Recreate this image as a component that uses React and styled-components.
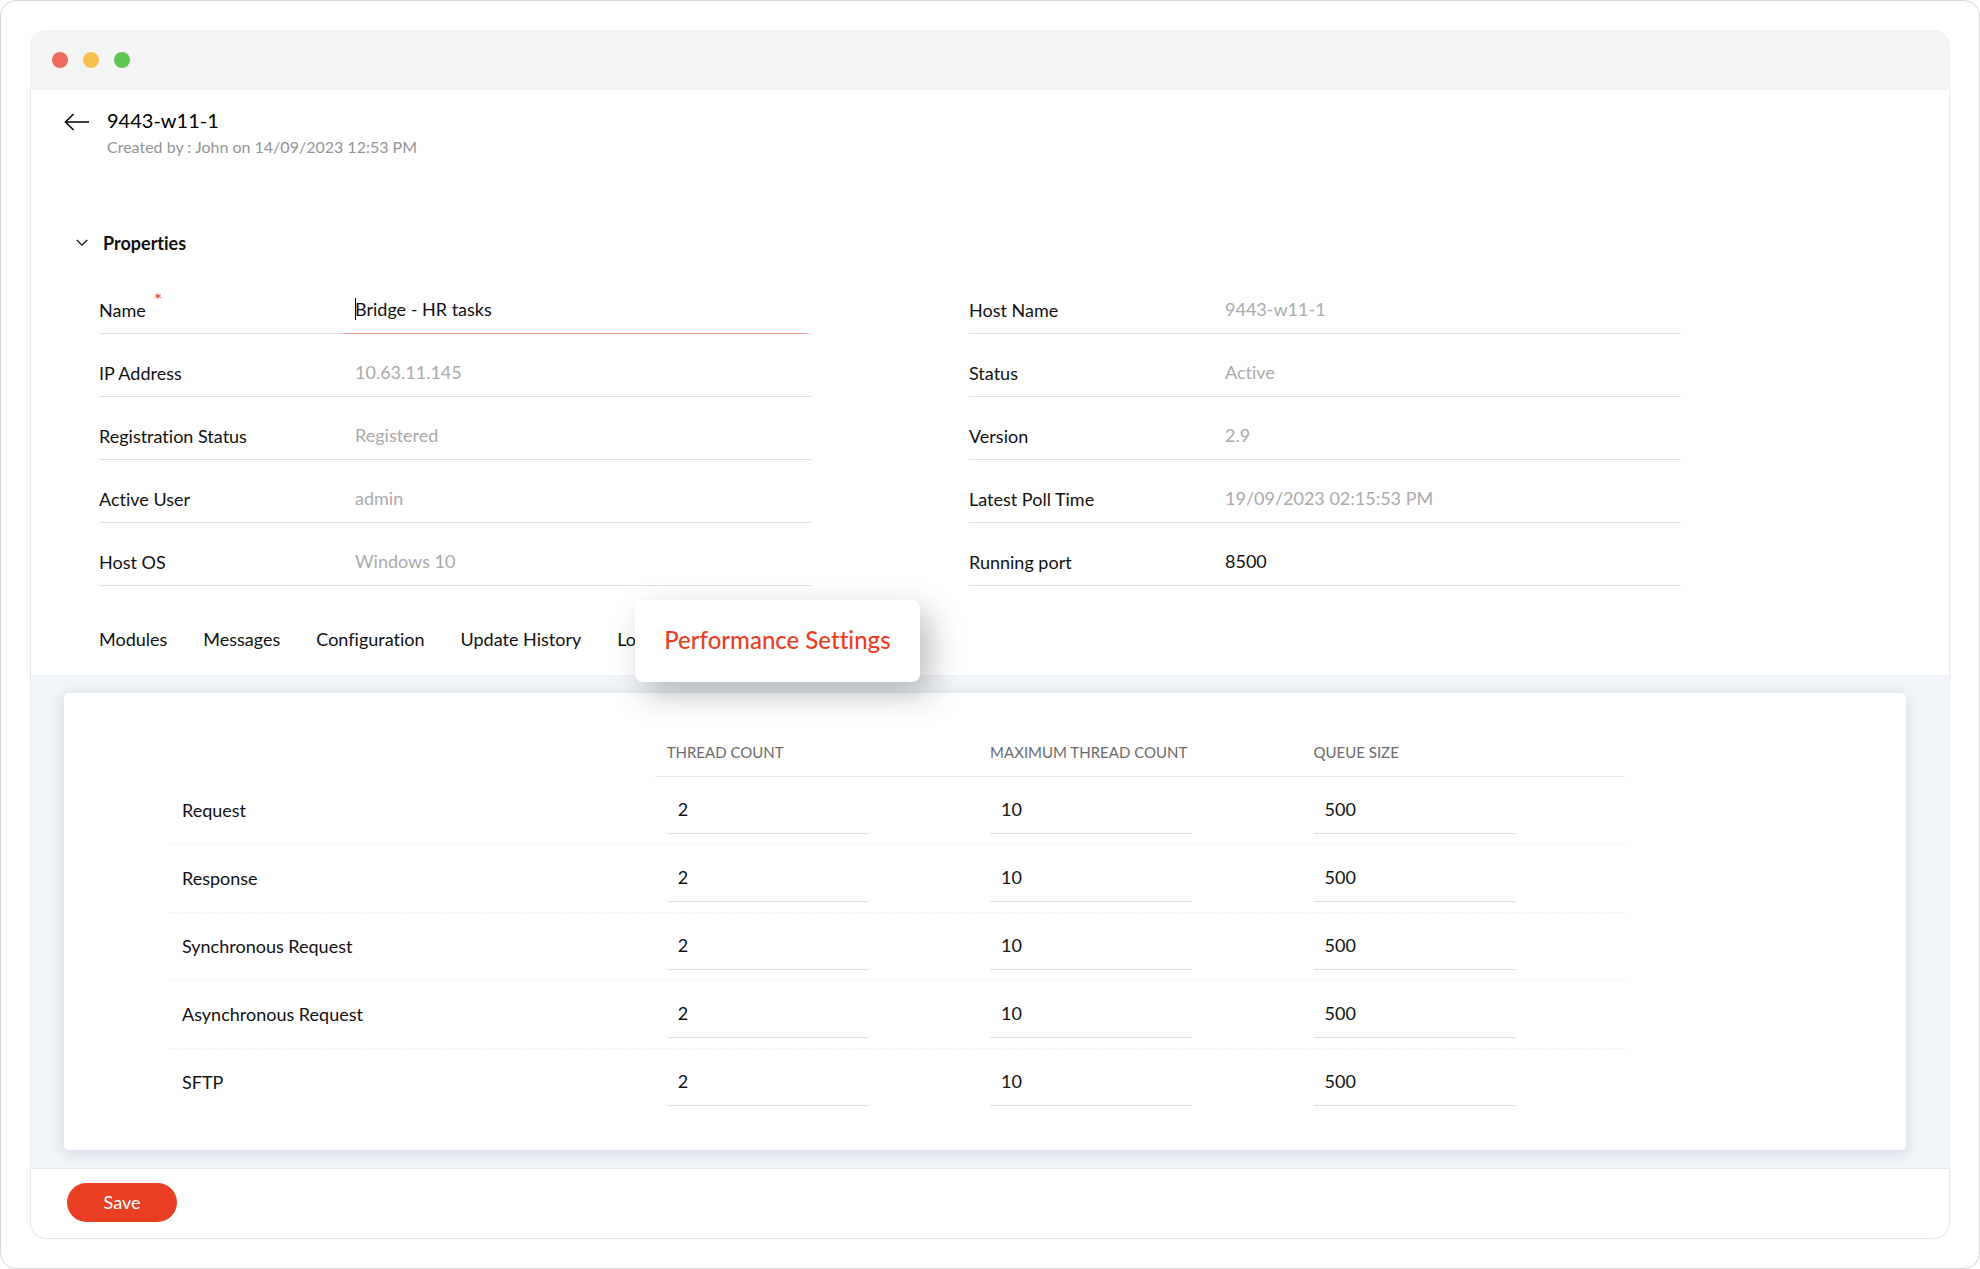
import React from "react";
import styled, { createGlobalStyle } from "styled-components";

const colors = {
  accent: "#ea3f25",
  accentLine: "#f4978c",
  band: "#f1f4f8",
  text: "#111111",
  muted: "#aaaaaa",
  subtle: "#949494",
  line: "#e0e0e0",
};

const leftFields = [
  { id: "name", label: "Name", value: "Bridge - HR tasks", required: true, editable: true },
  { id: "ip", label: "IP Address", value: "10.63.11.145" },
  { id: "registration", label: "Registration Status", value: "Registered" },
  { id: "user", label: "Active User", value: "admin" },
  { id: "os", label: "Host OS", value: "Windows 10" },
];

const rightFields = [
  { id: "host", label: "Host Name", value: "9443-w11-1" },
  { id: "status", label: "Status", value: "Active" },
  { id: "version", label: "Version", value: "2.9" },
  { id: "poll", label: "Latest Poll Time", value: "19/09/2023 02:15:53 PM" },
  { id: "port", label: "Running port", value: "8500", editable: true },
];

const tabs = ["Modules", "Messages", "Configuration", "Update History", "Logs"];
const columns = ["Thread Count", "Maximum Thread Count", "Queue Size"];
const rows = ["Request", "Response", "Synchronous Request", "Asynchronous Request", "SFTP"];
const defaults = ["2", "10", "500"];

const Field = ({ id, label, value, required, editable }) => (
  <FieldRow>
    <Label htmlFor={id}>
      {label}
      {required && <Required>*</Required>}
    </Label>
    <ValueCell $active={required}>
      <ValueInput id={id} defaultValue={value} readOnly={!editable} $editable={editable} $active={required} />
    </ValueCell>
  </FieldRow>
);

const App = () => {
  return (
    <Frame>
      <GlobalStyle />
      <Window>
        <TitleBar>
          <Dot $color="#ed6a5e" />
          <Dot $color="#f5bf4f" />
          <Dot $color="#61c554" />
        </TitleBar>

        <Header>
          <BackButton type="button" aria-label="Back">
            <svg width="26" height="18" viewBox="0 0 26 18" fill="none" stroke="#000" strokeWidth="1.5">
              <path d="M1.2 9H25M9.6 1L1.4 9l8.2 8" />
            </svg>
          </BackButton>
          <div>
            <Title>9443-w11-1</Title>
            <Created>Created by : John on 14/09/2023 12:53 PM</Created>
          </div>
        </Header>

        <SectionToggle type="button">
          <svg width="12" height="8" viewBox="0 0 12 8" fill="none" stroke="#111" strokeWidth="1.3">
            <path d="M0.8 1L6 6.2 11.2 1" />
          </svg>
          Properties
        </SectionToggle>

        <Properties>
          <div>
            {leftFields.map((field) => (
              <Field key={field.id} {...field} />
            ))}
          </div>
          <div>
            {rightFields.map((field) => (
              <Field key={field.id} {...field} />
            ))}
          </div>
        </Properties>

        <Tabs>
          {tabs.map((tab) => (
            <Tab key={tab} href="#">
              {tab}
            </Tab>
          ))}
          <ActiveTab href="#">Performance Settings</ActiveTab>
        </Tabs>

        <Band>
          <Card>
            <Table>
              <thead>
                <tr>
                  <Corner />
                  {columns.map((column) => (
                    <ColumnHead key={column} scope="col">
                      {column}
                    </ColumnHead>
                  ))}
                </tr>
              </thead>
              <tbody>
                {rows.map((row) => (
                  <Row key={row}>
                    <RowHead scope="row">{row}</RowHead>
                    {columns.map((column, i) => (
                      <Cell key={column}>
                        <CellInput aria-label={`${row} ${column}`} defaultValue={defaults[i]} />
                      </Cell>
                    ))}
                  </Row>
                ))}
              </tbody>
            </Table>
          </Card>
        </Band>

        <Footer>
          <SaveButton type="button">Save</SaveButton>
        </Footer>
      </Window>
    </Frame>
  );
};

const GlobalStyle = createGlobalStyle`
  * {
    box-sizing: border-box;
  }

  body {
    margin: 0;
    background: #fff;
    color: ${colors.text};
    font-family: Lato, "Open Sans", sans-serif;
    font-size: 18px;
    line-height: 24px;
    font-variant-ligatures: none;
  }

  button, input {
    font: inherit;
    font-variant-ligatures: none;
    color: inherit;
  }
`;

const Frame = styled.div`
  min-height: 100vh;
  padding: 29px;
  border: 1px solid #d6d6d6;
  border-radius: 16px;
`;

const Window = styled.main`
  border: 1px solid #e9e9e9;
  border-top: none;
  border-radius: 16px;
`;

const TitleBar = styled.div`
  display: flex;
  align-items: center;
  gap: 15px;
  height: 60px;
  margin: 0 -1px;
  padding: 0 22px;
  background: #f4f4f4;
  border-radius: 16px 16px 0 0;
`;

const Dot = styled.span`
  width: 16px;
  height: 16px;
  border-radius: 50%;
  background: ${(props) => props.$color};
`;

const Header = styled.header`
  display: flex;
  align-items: flex-start;
  gap: 17px;
  padding: 15px 33px 0;
`;

const BackButton = styled.button`
  display: flex;
  padding: 8px 0 0;
  border: none;
  background: none;
  cursor: pointer;
`;

const Title = styled.h1`
  margin: 0;
  font-size: 20px;
  font-weight: 400;
  line-height: 30px;
  color: #000;
`;

const Created = styled.p`
  margin: 0;
  font-size: 16px;
  color: ${colors.subtle};
`;

const SectionToggle = styled.button`
  display: flex;
  align-items: center;
  gap: 15px;
  margin: 72px 0 16px 45px;
  padding: 0;
  border: none;
  background: none;
  font-weight: 700;
  cursor: pointer;
`;

const Properties = styled.section`
  display: grid;
  grid-template-columns: 1fr 1fr;
  gap: 158px;
  padding: 0 268px 0 68px;
`;

const FieldRow = styled.div`
  display: flex;
  height: 63px;
  border-bottom: 1px solid ${colors.line};
`;

const Label = styled.label`
  flex: 0 0 244px;
  padding-top: 27px;
`;

const Required = styled.span`
  margin-left: 8px;
  font-size: 20px;
  line-height: 0;
  vertical-align: 10px;
  color: ${colors.accent};
`;

const ValueCell = styled.div`
  position: relative;
  flex: 1;
  margin-right: 4px;

  /* text cursor of the field being edited */
  &::before {
    content: "";
    display: ${(props) => (props.$active ? "block" : "none")};
    position: absolute;
    top: 27px;
    left: 12px;
    width: 1px;
    height: 22px;
    background: #000;
  }
`;

const ValueInput = styled.input`
  display: block;
  width: 100%;
  height: 63px;
  padding: 14px 12px 0;
  border: none;
  border-bottom: 1px solid ${(props) => (props.$active ? colors.accentLine : "transparent")};
  outline: none;
  background: none;
  color: ${(props) => (props.$editable ? colors.text : colors.muted)};
`;

const Tabs = styled.nav`
  display: flex;
  align-items: flex-start;
  gap: 36px;
  padding: 41px 68px 24px;
`;

const Tab = styled.a`
  color: inherit;
  text-decoration: none;
`;

const ActiveTab = styled(Tab)`
  position: relative;
  z-index: 1;
  margin: -27px 0 -31px -54px;
  padding: 26px 29px 28px;
  border-radius: 8px;
  background: #fff;
  box-shadow: 10px 12px 32px rgba(0, 0, 0, 0.26);
  color: ${colors.accent};
  font-size: 24px;
  font-weight: 500;
  line-height: 28px;
`;

const Band = styled.section`
  padding: 18px 43px 18px 33px;
  border-bottom: 1px solid #e9e9e9;
  background: ${colors.band};
`;

const Card = styled.div`
  padding: 36px 281px 33px 104px;
  border-radius: 5px;
  background: #fff;
  box-shadow: 0 3px 14px rgba(120, 145, 175, 0.26);
`;

const Table = styled.table`
  width: 100%;
  table-layout: fixed;
  border-collapse: separate;
  border-spacing: 0;
`;

const Corner = styled.td`
  width: 33.4%;
`;

const ColumnHead = styled.th`
  height: 48px;
  padding: 0 12px 2px;
  border-bottom: 1px solid #e6e6e6;
  color: #6b6b6b;
  font-size: 15px;
  font-weight: 400;
  text-align: left;
  text-transform: uppercase;
`;

const Row = styled.tr`
  height: 68px;

  &:not(:last-child) > * {
    border-bottom: 1px dashed #f2f2f2;
  }
`;

const RowHead = styled.th`
  padding: 0 14px 2px;
  font-weight: 400;
  text-align: left;
`;

const Cell = styled.td`
  padding: 8px 12px 0;
  vertical-align: top;
`;

const CellInput = styled.input`
  display: block;
  width: 202px;
  max-width: 100%;
  height: 49px;
  padding: 0 11px;
  border: none;
  border-bottom: 1px solid ${colors.line};
  outline: none;
  background: none;
`;

const Footer = styled.footer`
  padding: 14px 36px 16px;
`;

const SaveButton = styled.button`
  display: block;
  width: 110px;
  height: 39px;
  padding: 0 0 2px;
  border: none;
  border-radius: 20px;
  background: ${colors.accent};
  color: #fff;
  cursor: pointer;
`;

export default App;
